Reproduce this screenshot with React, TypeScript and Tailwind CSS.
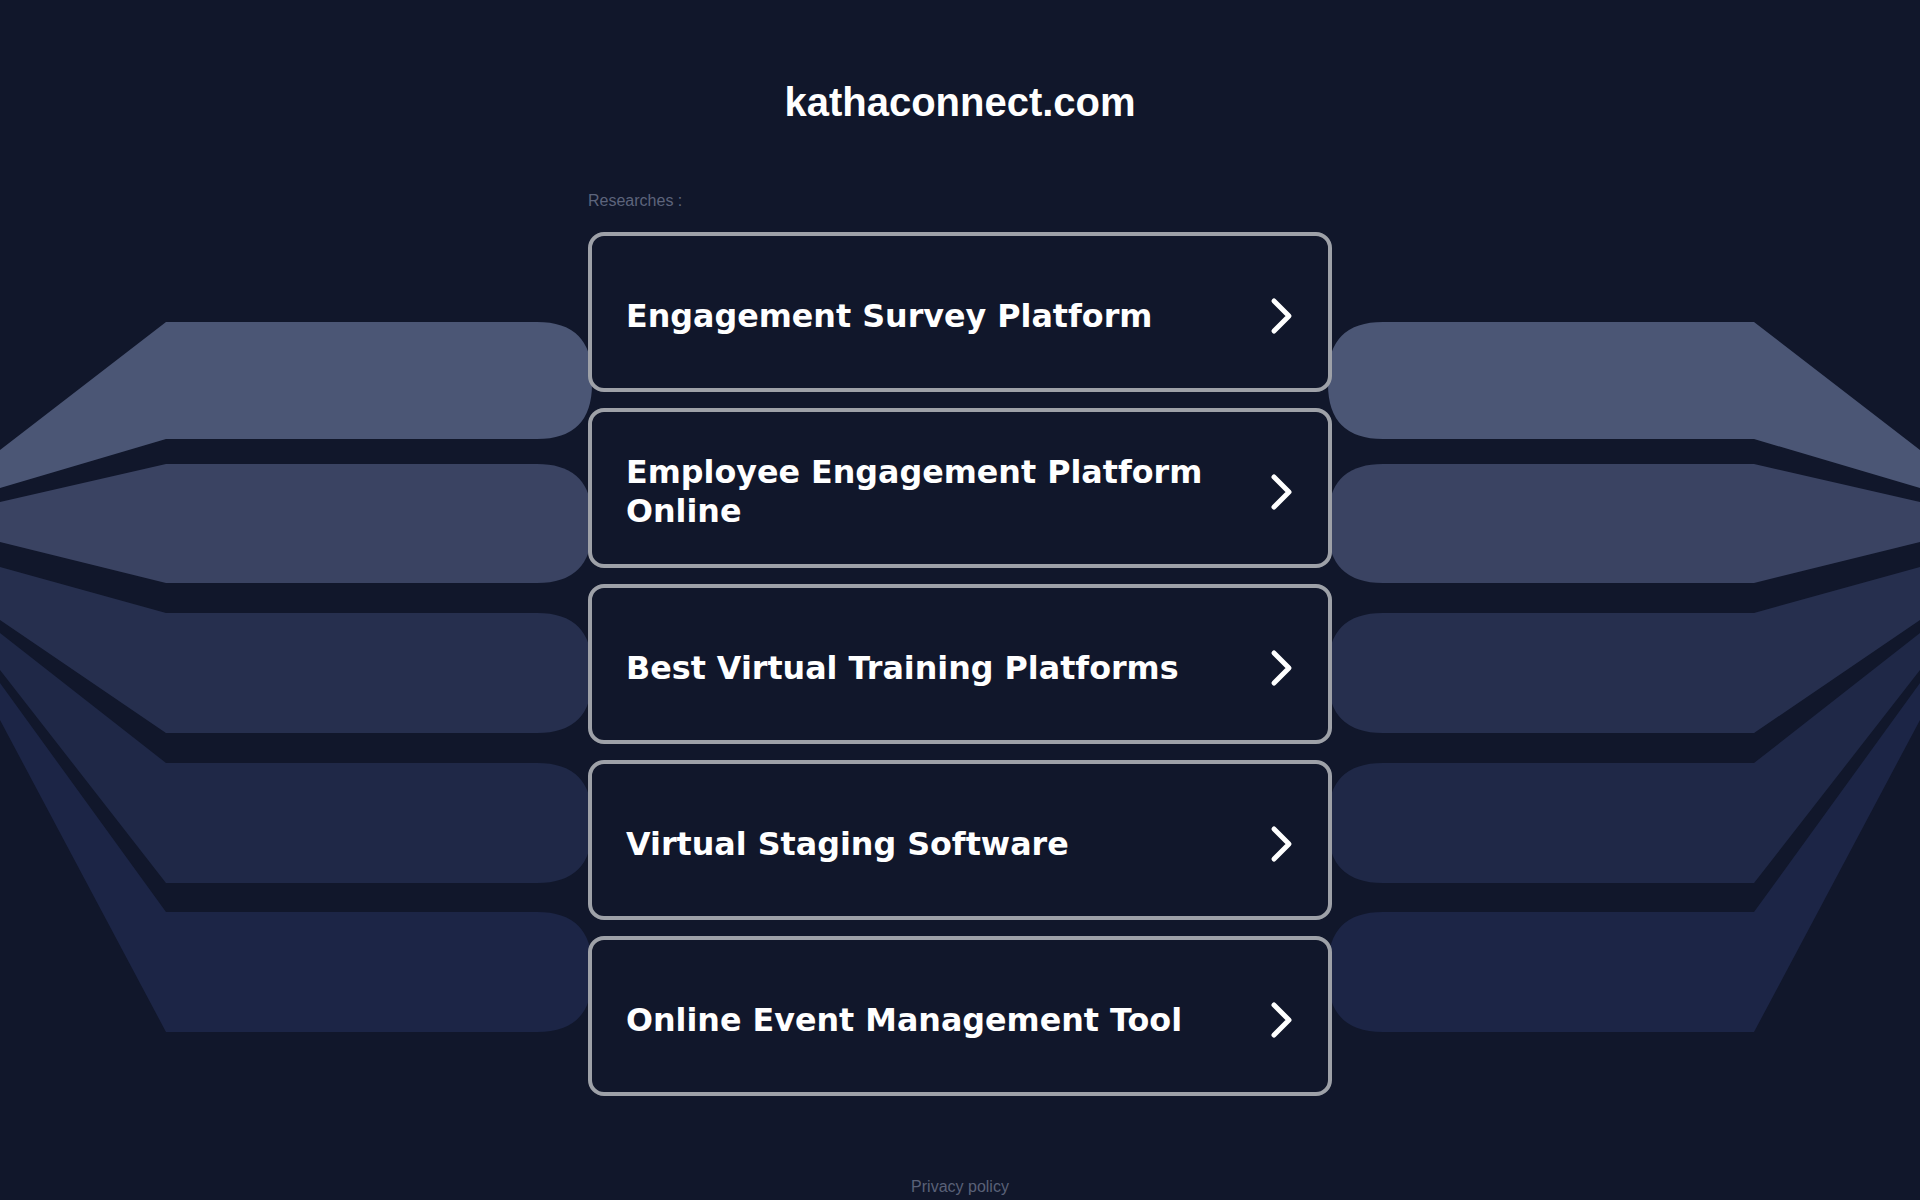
const searches = [
  "Engagement Survey Platform",
  "Employee Engagement Platform Online",
  "Best Virtual Training Platforms",
  "Virtual Staging Software",
  "Online Event Management Tool",
];

// left half of the background fan, mirrored for the right side
const bands = [
  { t: 322, b: 439, lt: 450, lb: 488, fill: "#4b5675" },
  { t: 464, b: 583, lt: 502, lb: 542, fill: "#3a4362" },
  { t: 613, b: 733, lt: 567, lb: 620, fill: "#262f4e" },
  { t: 763, b: 883, lt: 633, lb: 670, fill: "#1f2847" },
  { t: 912, b: 1032, lt: 683, lb: 720, fill: "#1c2546" },
];

function bandPath(t: number, b: number, lt: number, lb: number) {
  const x = 592;
  const r = 55;
  return `M0 ${lt} L166 ${t} L${x - r} ${t} Q${x} ${t} ${x} ${t + r} L${x} ${b - r} Q${x} ${b} ${x - r} ${b} L166 ${b} L0 ${lb} Z`;
}

function Fan({ className }: { className: string }) {
  return (
    <svg className={className} width="600" height="1200" viewBox="0 0 600 1200">
      {bands.map((band, i) => (
        <path key={i} d={bandPath(band.t, band.b, band.lt, band.lb)} fill={band.fill} />
      ))}
    </svg>
  );
}

function Chevron() {
  return (
    <svg width="26" height="42" viewBox="0 0 26 42" className="shrink-0">
      <polyline
        points="6,6 21,21 6,36"
        fill="none"
        stroke="white"
        strokeWidth="5"
        strokeLinecap="round"
        strokeLinejoin="round"
      />
    </svg>
  );
}

export default function App() {
  return (
    <div className="relative min-h-screen h-[1200px] overflow-hidden bg-[#11172b]">
      {/* background fan */}
      <Fan className="absolute left-0 top-0" />
      <Fan className="absolute right-0 top-0 -scale-x-100" />

      <div className="relative flex flex-col items-center pt-[78px]">
        <h1 className="text-[40px] leading-[48px] font-bold text-white font-['Liberation_Sans',Arial,sans-serif]">
          kathaconnect.com
        </h1>

        <div className="w-[744px] mt-[65px]">
          <div className="text-[16px] leading-[20px] text-[#5d647c] font-['Liberation_Sans',Arial,sans-serif]">
            Researches :
          </div>

          <div className="mt-[21px] flex flex-col gap-[16px]">
            {searches.map((s) => (
              <a
                key={s}
                href="#"
                className="h-[160px] flex items-center justify-between gap-8 px-[34px] pt-[8px] rounded-[16px] border-4 border-[#9ea1a8] bg-[#11172b]"
              >
                <span className="text-[31.75px] leading-[39px] font-bold text-white font-['DejaVu_Sans',Verdana,sans-serif]">
                  {s}
                </span>
                <Chevron />
              </a>
            ))}
          </div>
        </div>

        <div className="mt-[81px] text-[16px] leading-[20px] text-[#5a6178] font-['Liberation_Sans',Arial,sans-serif]">
          Privacy policy
        </div>
      </div>
    </div>
  );
}
